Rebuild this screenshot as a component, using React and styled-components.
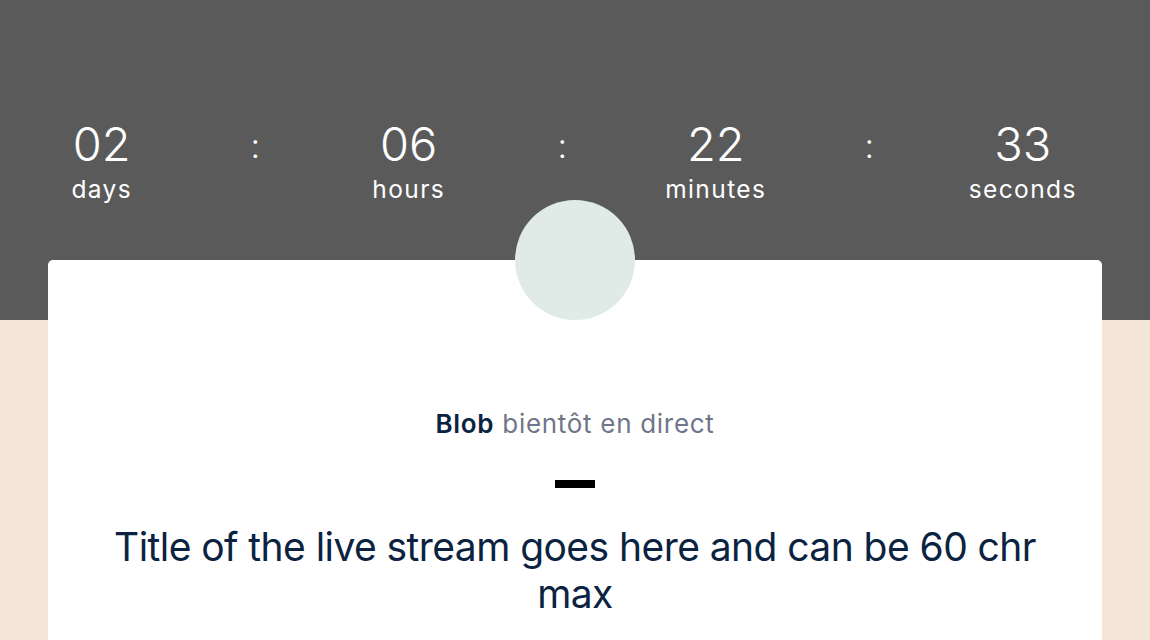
import * as React from 'react'
import styled, { createGlobalStyle } from 'styled-components'

const units = [
    { value: '02', label: 'days' },
    { value: '06', label: 'hours' },
    { value: '22', label: 'minutes' },
    { value: '33', label: 'seconds' },
]

const App = () => {
    return (
        <Page>
            <GlobalStyle />
            <Band>
                <Countdown>
                    {units.map((u, i) => (
                        <React.Fragment key={u.label}>
                            {i > 0 && <Separator>:</Separator>}
                            <Unit>
                                <Value>{u.value}</Value>
                                <Label>{u.label}</Label>
                            </Unit>
                        </React.Fragment>
                    ))}
                </Countdown>
            </Band>
            <Card>
                <Avatar />
                <Host><strong>Blob</strong> bientôt en direct</Host>
                <Dash />
                <Title>Title of the live stream goes here and can be 60 chr max</Title>
            </Card>
        </Page>
    )
}

export default App

const GlobalStyle = createGlobalStyle`
    html, body {
        margin: 0;
        padding: 0;
        background: #f3e5d8;
        font-family: Inter, "Noto Sans", sans-serif;
        -webkit-font-smoothing: antialiased;
    }
`

const Page = styled.div`
    position: relative;
    min-height: 640px;
    background: linear-gradient(to bottom, #5a5a5a 0, #5a5a5a 320px, #f3e5d8 320px);
    overflow: hidden;
`

const Band = styled.header`
    padding: 120px 0 0 25px;
    height: 140px;
`

const Countdown = styled.div`
    display: grid;
    grid-template-columns: repeat(7, 153.5px);
    color: #ffffff;
`

const Unit = styled.div`
    display: flex;
    flex-direction: column;
    align-items: center;
`

const Value = styled.div`
    font-size: 47px;
    font-weight: 300;
    line-height: 48px;
`

const Label = styled.div`
    margin-top: 9px;
    font-size: 24.5px;
    font-weight: 400;
    letter-spacing: 1.4px;
    line-height: 24px;
`

const Separator = styled.div`
    text-align: center;
    font-size: 34px;
    font-weight: 300;
    line-height: 48px;
    padding-top: 2px;
`

const Card = styled.main`
    position: relative;
    margin: 0 48px;
    padding: 144px 56px 40px;
    background: #ffffff;
    border-radius: 5px;
    text-align: center;
    min-height: 300px;
`

const Avatar = styled.div`
    position: absolute;
    top: -60px;
    left: 50%;
    width: 120px;
    height: 120px;
    margin-left: -60px;
    border-radius: 50%;
    background: #e0ebe7;
`

const Host = styled.p`
    margin: 0;
    font-size: 26px;
    letter-spacing: 0.7px;
    line-height: 40px;
    color: #6f7689;

    strong {
        font-weight: 600;
        color: #0b2341;
    }
`

const Dash = styled.div`
    width: 40px;
    height: 8px;
    margin: 36px auto 0;
    background: #000000;
`

const Title = styled.h1`
    margin: 35px 0 0;
    font-size: 39px;
    font-weight: 400;
    letter-spacing: -0.56px;
    line-height: 47px;
    color: #0b2341;
`
